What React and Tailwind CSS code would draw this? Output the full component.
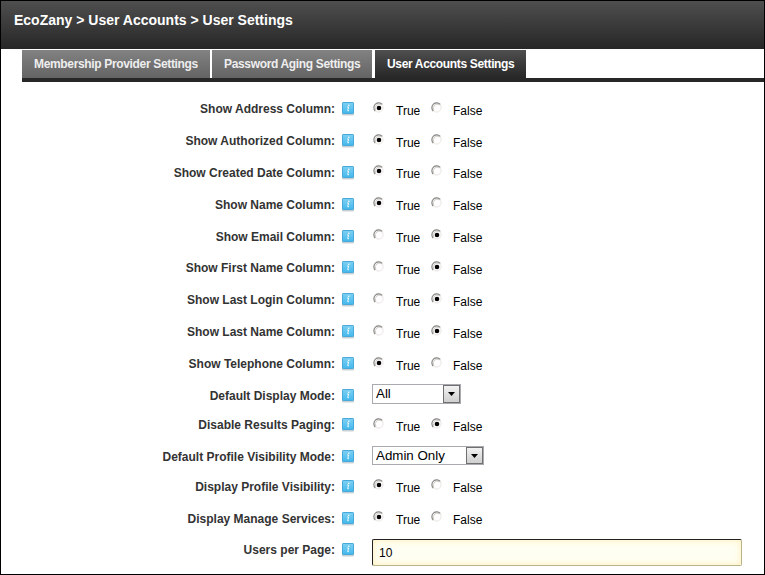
const rows = [
  { label: 'Show Address Column:', h: 'h-8', value: true },
  { label: 'Show Authorized Column:', h: 'h-8', value: true },
  { label: 'Show Created Date Column:', h: 'h-8', value: true, up: true },
  { label: 'Show Name Column:', h: 'h-8', value: true, up: true },
  { label: 'Show Email Column:', h: 'h-[31px]', value: false, up: true },
  { label: 'Show First Name Column:', h: 'h-8', value: false },
  { label: 'Show Last Login Column:', h: 'h-8', value: false },
  { label: 'Show Last Name Column:', h: 'h-8', value: false },
  { label: 'Show Telephone Column:', h: 'h-8', value: true },
  { label: 'Default Display Mode:', h: 'h-[29px]', select: 'All', box: 'mt-px h-5 w-[89px]' },
  { label: 'Disable Results Paging:', h: 'h-8', value: false },
  { label: 'Default Profile Visibility Mode:', h: 'h-[30px]', select: 'Admin Only', box: 'mt-[2px] h-[19px] w-28' },
  { label: 'Display Profile Visibility:', h: 'h-8', value: true, up: true },
  { label: 'Display Manage Services:', h: 'h-[31px]', value: true, up: true },
  { label: 'Users per Page:', h: 'h-[25px]', input: '10' },
];

function InfoIcon() {
  return (
    <svg className="ml-[7px] mt-[6px] h-[14px] w-[13px] shrink-0" viewBox="0 0 13 14">
      <defs>
        <linearGradient id="info" x1="0" y1="0" x2="0" y2="1">
          <stop offset="0" stopColor="#7fd0f2" />
          <stop offset="1" stopColor="#43b8ec" />
        </linearGradient>
      </defs>
      <rect x="0" y="2" width="12" height="11.4" rx="1" fill="#c9d1d5" />
      <rect x="0.5" y="0.5" width="11" height="11" rx="0.6" fill="url(#info)" stroke="#45a9dc" />
      <circle cx="6.8" cy="3.3" r="0.8" fill="#fff" />
      <path d="M5.1 5h1.5L5.7 8.7h1.2" fill="none" stroke="#fff" strokeOpacity="0.9" strokeWidth="1" />
    </svg>
  );
}

function Radio({ checked }) {
  return (
    <svg className="h-3 w-3 shrink-0" viewBox="0 0 12 12">
      <circle cx="5.6" cy="5.6" r="4.5" fill="#fff" stroke="#e9e6e1" />
      <path d="M2.2 9.1A4.8 4.8 0 0 1 9.3 2.4" fill="none" stroke="#858585" strokeWidth="1.1" />
      <path d="M2.9 8.2A3.9 3.9 0 0 1 8.4 2.9" fill="none" stroke="#bcb6ae" strokeWidth="0.7" />
      {checked && <circle cx="6" cy="6" r="2.3" fill="#000" />}
    </svg>
  );
}

function Choice({ value, up }) {
  return (
    <div className={`flex pl-[18px] text-[12px] leading-[14px] text-black ${up ? 'pt-[5px]' : 'pt-[6px]'}`}>
      <Radio checked={value} />
      <span className="ml-[11px] mt-[2px] w-[35px]">True</span>
      <Radio checked={!value} />
      <span className="ml-[10px] mt-[2px]">False</span>
    </div>
  );
}

function Select({ text, box }) {
  return (
    <div className={`ml-[17px] flex items-stretch border border-[#a9a9b0] bg-white ${box}`}>
      <span className="flex-1 whitespace-nowrap pl-[3px] text-[13.33px] leading-[17px] text-black">{text}</span>
      <span className="flex w-[17px] items-center justify-center border border-[#707070] bg-linear-to-b from-[#f2f2f2] to-[#cfcfcf]">
        <svg className="h-1 w-[7px]" viewBox="0 0 7 4"><path d="M0 0h7L3.5 4z" fill="#000" /></svg>
      </span>
    </div>
  );
}

export default function App() {
  return (
    <div className="h-[575px] w-[765px] overflow-hidden border border-black bg-white font-['Liberation_Sans',Arial,sans-serif]">
      <header className="h-12 bg-linear-to-b from-[#4f4f4f] to-[#272727] pl-[13px] pt-[11px] text-[14px] font-bold leading-4 text-white">
        EcoZany &gt; User Accounts &gt; User Settings
      </header>
      <nav className="ml-[21px] mt-px flex h-8 border-b-4 border-[#272727] text-[12px] font-bold leading-[28px] tracking-[-0.34px]">
        <div className="mr-[2px] w-[188px] whitespace-nowrap bg-linear-to-b from-[#828282] to-[#646464] pl-3 text-[#eeeeee]">Membership Provider Settings</div>
        <div className="mr-[3px] w-[160px] whitespace-nowrap bg-linear-to-b from-[#828282] to-[#646464] pl-3 text-[#eeeeee]">Password Aging Settings</div>
        <div className="w-[151px] whitespace-nowrap bg-linear-to-b from-[#4f4f4f] to-[#272727] pl-3 text-white">User Accounts Settings</div>
      </nav>
      <main className="pt-[14px]">
        {rows.map((r) => (
          <div key={r.label} className={`flex items-start ${r.h}`}>
            <div className="w-[334px] whitespace-nowrap pt-[5px] text-right text-[12px] font-bold leading-[16px] text-[#333]">{r.label}</div>
            <InfoIcon />
            {r.select ? (
              <Select text={r.select} box={r.box} />
            ) : r.input ? (
              <input
                defaultValue={r.input}
                className="ml-[17px] mt-[2px] h-[27px] w-[370px] shrink-0 rounded-[2px] border border-[#b9b38c] border-l-[#222] border-t-[#222] bg-[#fffef2] px-[6px] text-[12px] text-black shadow-[inset_0_0_7px_#ffefb8] outline-none"
              />
            ) : (
              <Choice value={r.value} up={r.up} />
            )}
          </div>
        ))}
      </main>
    </div>
  );
}
